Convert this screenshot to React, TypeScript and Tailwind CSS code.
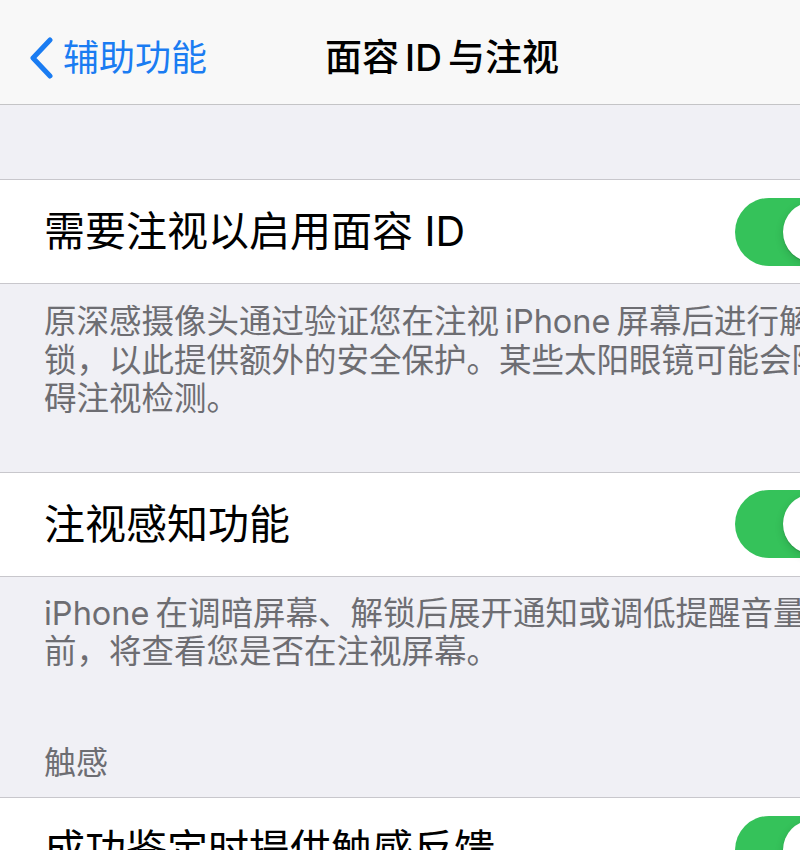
import type { ReactNode } from "react";

const FONT = "font-['Inter','Noto_Sans_CJK_SC',sans-serif]";

function Toggle() {
  return (
    <span className="flex h-[68px] w-[112px] shrink-0 items-center justify-end rounded-full bg-[#35c25a] p-[4px]">
      <span className="h-[60px] w-[60px] rounded-full bg-white shadow-[0_3px_8px_rgba(0,0,0,0.15),0_1px_1px_rgba(0,0,0,0.16)]" />
    </span>
  );
}

function SwitchRow({ label }: { label: ReactNode }) {
  return (
    <div className="flex h-[105px] items-center justify-between border-y border-[#c8c7cc] bg-white pl-[44px] pr-[37px]">
      <span className="text-[41px] leading-none text-black">{label}</span>
      <Toggle />
    </div>
  );
}

// small gap between CJK and Latin, like iOS renders it
const Gap = () => <span className="inline-block w-[6px]" />;

function Footer({ lines, className }: { lines: ReactNode[]; className?: string }) {
  return (
    <div className={`pl-[44px] text-[32.5px] leading-[38.5px] whitespace-nowrap text-[#6d6d72] ${className ?? ""}`}>
      {lines.map((line, i) => (
        <div key={i}>{line}</div>
      ))}
    </div>
  );
}

function NavBar({ children }: { children?: ReactNode }) {
  return (
    <header className="grid h-[105px] grid-cols-[1fr_auto_1fr] items-center border-b border-[#c4c4c6] bg-[#f8f8f8] pt-[11px]">
      <div className="flex items-center gap-[9px] pl-[28px] text-[#1a7cf2]">
        <svg width="26" height="42" viewBox="0 0 26 42" fill="none">
          <path d="M22 3 L5 21 L22 39" stroke="currentColor" strokeWidth="5" strokeLinecap="round" strokeLinejoin="round" />
        </svg>
        <span className="text-[36px] leading-none">辅助功能</span>
      </div>
      {children}
      <div />
    </header>
  );
}

export default function App() {
  return (
    <div className={`h-[850px] w-[800px] overflow-hidden bg-[#f0f0f5] ${FONT}`}>
      <div className="w-[884px]">
        <NavBar>
          <h1 className="text-[37px] leading-none font-medium text-black">
            面容<Gap />ID<Gap />与注视
          </h1>
        </NavBar>

        <div className="h-[74px]" />

        <SwitchRow label="需要注视以启用面容 ID" />
        <Footer
          className="pt-[19px] pb-[53px]"
          lines={[
            <>
              原深感摄像头通过验证您在注视<Gap />iPhone<Gap />屏幕后进行解
            </>,
            "锁，以此提供额外的安全保护。某些太阳眼镜可能会阻",
            "碍注视检测。",
          ]}
        />

        <SwitchRow label="注视感知功能" />
        <Footer
          className="pt-[18px]"
          lines={[
            <>
              iPhone<Gap />在调暗屏幕、解锁后展开通知或调低提醒音量
            </>,
            "前，将查看您是否在注视屏幕。",
          ]}
        />

        <div className="pt-[72px] pb-[15px] pl-[44px] text-[32px] leading-[38.5px] text-[#6d6d72]">触感</div>

        <SwitchRow label="成功鉴定时提供触感反馈" />
      </div>
    </div>
  );
}
